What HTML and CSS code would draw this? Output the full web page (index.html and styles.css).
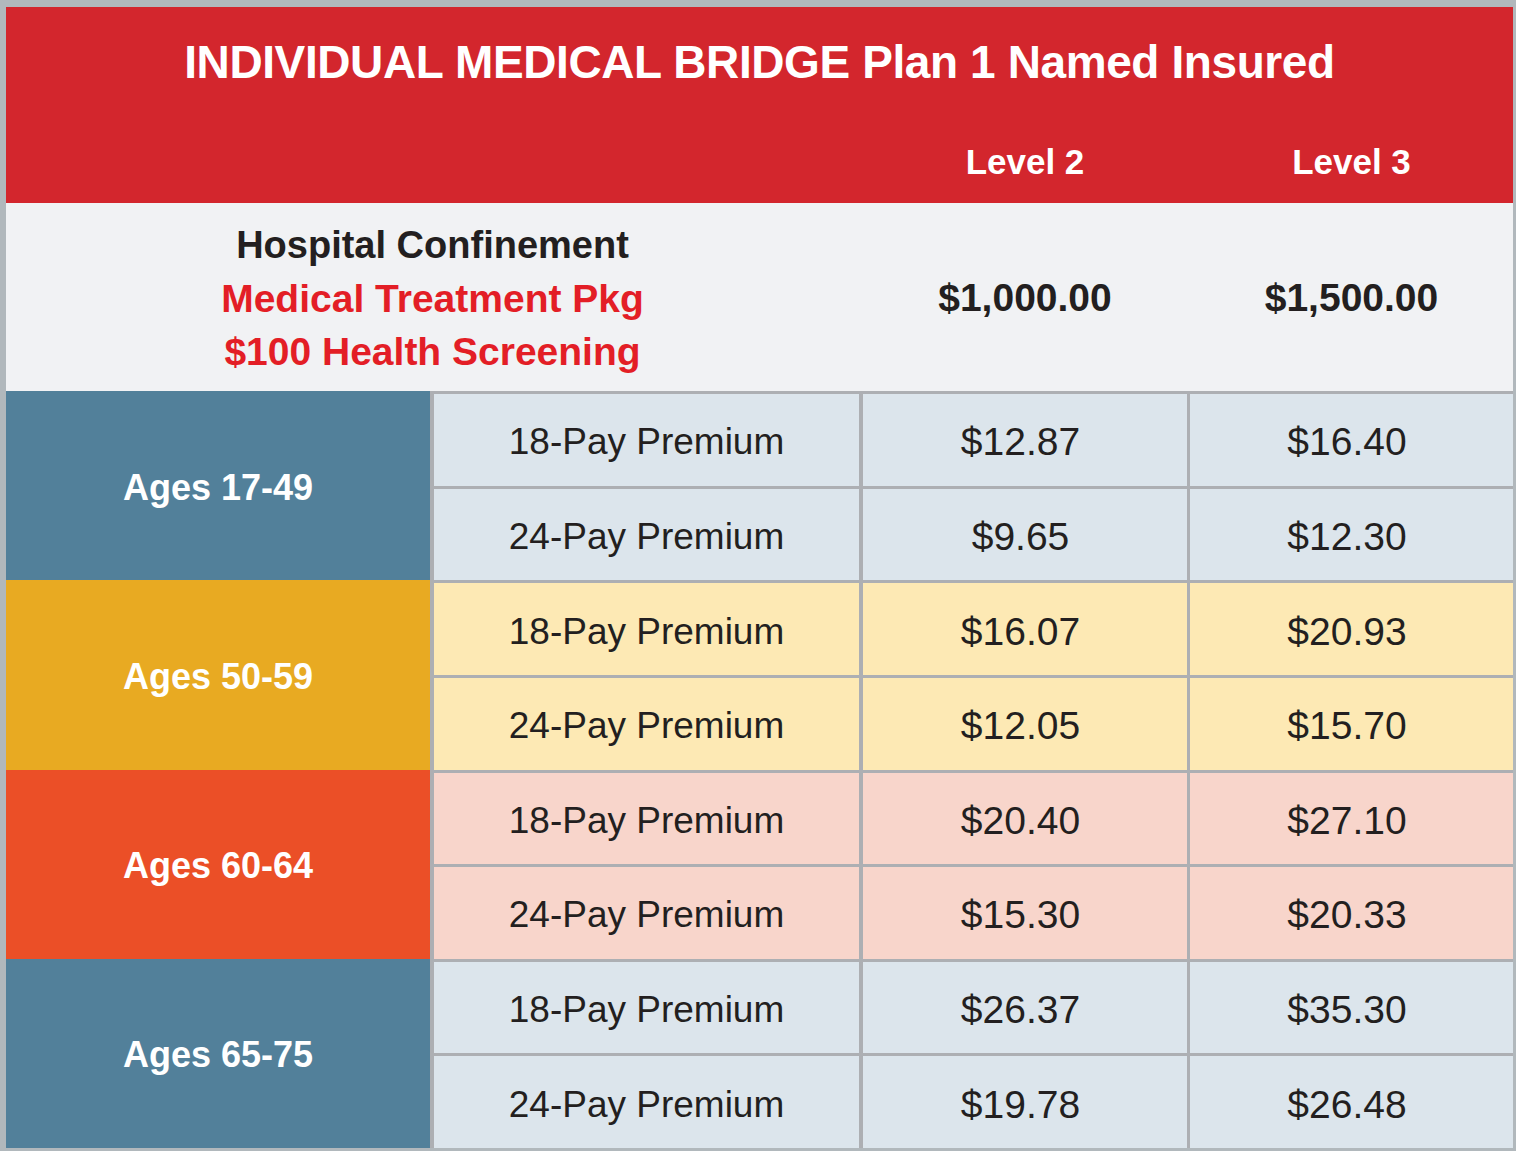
FILE: index.html
```html
<!DOCTYPE html>
<html lang="en">
<head>
<meta charset="utf-8">
<title>Individual Medical Bridge Plan 1 Named Insured</title>
<link rel="stylesheet" href="styles.css">
</head>
<body>
<div class="sheet">
  <header class="head">
    <h1 class="title">INDIVIDUAL MEDICAL BRIDGE Plan 1 Named Insured</h1>
    <div class="levels">
      <div class="lv-spacer"></div>
      <div class="lv lv2">Level 2</div>
      <div class="lv lv3">Level 3</div>
    </div>
  </header>
  <section class="band">
    <div class="band-desc">
      <div class="dk">Hospital Confinement</div>
      <div class="rd">Medical Treatment Pkg</div>
      <div class="rd">$100 Health Screening</div>
    </div>
    <div class="band-val c2">$1,000.00</div>
    <div class="band-val c3">$1,500.00</div>
  </section>
  <section class="rates">
    <div class="age age-blue">Ages 17-49</div>
    <div class="cell lbl t-blue">18-Pay Premium</div>
    <div class="cell num c2 t-blue">$12.87</div>
    <div class="cell num c3 t-blue">$16.40</div>
    <div class="cell lbl t-blue">24-Pay Premium</div>
    <div class="cell num c2 t-blue">$9.65</div>
    <div class="cell num c3 t-blue">$12.30</div>

    <div class="age age-gold">Ages 50-59</div>
    <div class="cell lbl t-gold">18-Pay Premium</div>
    <div class="cell num c2 t-gold">$16.07</div>
    <div class="cell num c3 t-gold">$20.93</div>
    <div class="cell lbl t-gold">24-Pay Premium</div>
    <div class="cell num c2 t-gold">$12.05</div>
    <div class="cell num c3 t-gold">$15.70</div>

    <div class="age age-orange">Ages 60-64</div>
    <div class="cell lbl t-orange">18-Pay Premium</div>
    <div class="cell num c2 t-orange">$20.40</div>
    <div class="cell num c3 t-orange">$27.10</div>
    <div class="cell lbl t-orange">24-Pay Premium</div>
    <div class="cell num c2 t-orange">$15.30</div>
    <div class="cell num c3 t-orange">$20.33</div>

    <div class="age age-blue">Ages 65-75</div>
    <div class="cell lbl t-blue">18-Pay Premium</div>
    <div class="cell num c2 t-blue">$26.37</div>
    <div class="cell num c3 t-blue">$35.30</div>
    <div class="cell lbl t-blue">24-Pay Premium</div>
    <div class="cell num c2 t-blue">$19.78</div>
    <div class="cell num c3 t-blue">$26.48</div>
  </section>
</div>
</body>
</html>
```
FILE: styles.css
```css
html, body {
  margin: 0;
  padding: 0;
  background: #ffffff;
}

body {
  font-family: "Liberation Sans", Arial, sans-serif;
  color: #231f20;
}

.sheet {
  width: 1507px;
  border-style: solid;
  border-color: #b1b8bc;
  border-width: 7px 3px 3px 6px;
  background: #f1f2f4;
}

/* ---------- red header ---------- */
.head {
  background: #d3262d;
  color: #ffffff;
  height: 196px;
  display: flex;
  flex-direction: column;
}

.title {
  margin: 0;
  height: 110px;
  display: flex;
  align-items: center;
  justify-content: center;
  font-size: 46px;
  font-weight: 700;
  letter-spacing: -0.4px;
}

.levels {
  display: grid;
  grid-template-columns: 853px 328px 326px;
  flex: 1;
  align-items: center;
  padding-top: 4px;
}

.lv {
  font-size: 35px;
  font-weight: 700;
  text-align: center;
}

.lv2 { padding-left: 4px; }
.lv3 { padding-left: 3px; }

/* ---------- grey description band ---------- */
.band {
  height: 188px;
  display: grid;
  grid-template-columns: 853px 328px 326px;
  align-items: center;
  background: #f1f2f4;
}

.band-desc {
  text-align: center;
  font-size: 38px;
  font-weight: 700;
  line-height: 53px;
  padding-top: 2px;
}

.band-desc .dk { color: #231f20; }
.band-desc .rd { color: #e31e26; font-size: 39px; }

.band-val {
  text-align: center;
  font-size: 39px;
  font-weight: 700;
  padding-top: 2px;
}

.band-val.c2 { padding-left: 4px; }
.band-val.c3 { padding-left: 3px; }

/* ---------- rate table ---------- */
.rates {
  display: grid;
  grid-template-columns: 424px 429px 328px 326px;
  grid-template-rows: repeat(8, 1fr);
  height: 757px;
}

.age {
  grid-column: 1;
  grid-row: span 2;
  display: flex;
  align-items: center;
  justify-content: center;
  color: #ffffff;
  font-size: 36px;
  font-weight: 700;
  padding-top: 4px;
}

.age-blue { background: #52809a; }
.age-gold { background: #e8aa22; }
.age-orange { background: #eb4f27; }

.cell {
  display: flex;
  align-items: center;
  justify-content: center;
  border-top: 3px solid #adafb3;
  border-left: 4px solid #adafb3;
  color: #231f20;
  padding-top: 5px;
}

.cell.c3 { border-left-width: 3px; }

.lbl {
  font-size: 37px;
}

.num {
  font-size: 39px;
  padding-right: 9px;
}

.t-blue { background: #dce5ec; }
.t-gold { background: #fde9b4; }
.t-orange { background: #f8d5cb; }
```
